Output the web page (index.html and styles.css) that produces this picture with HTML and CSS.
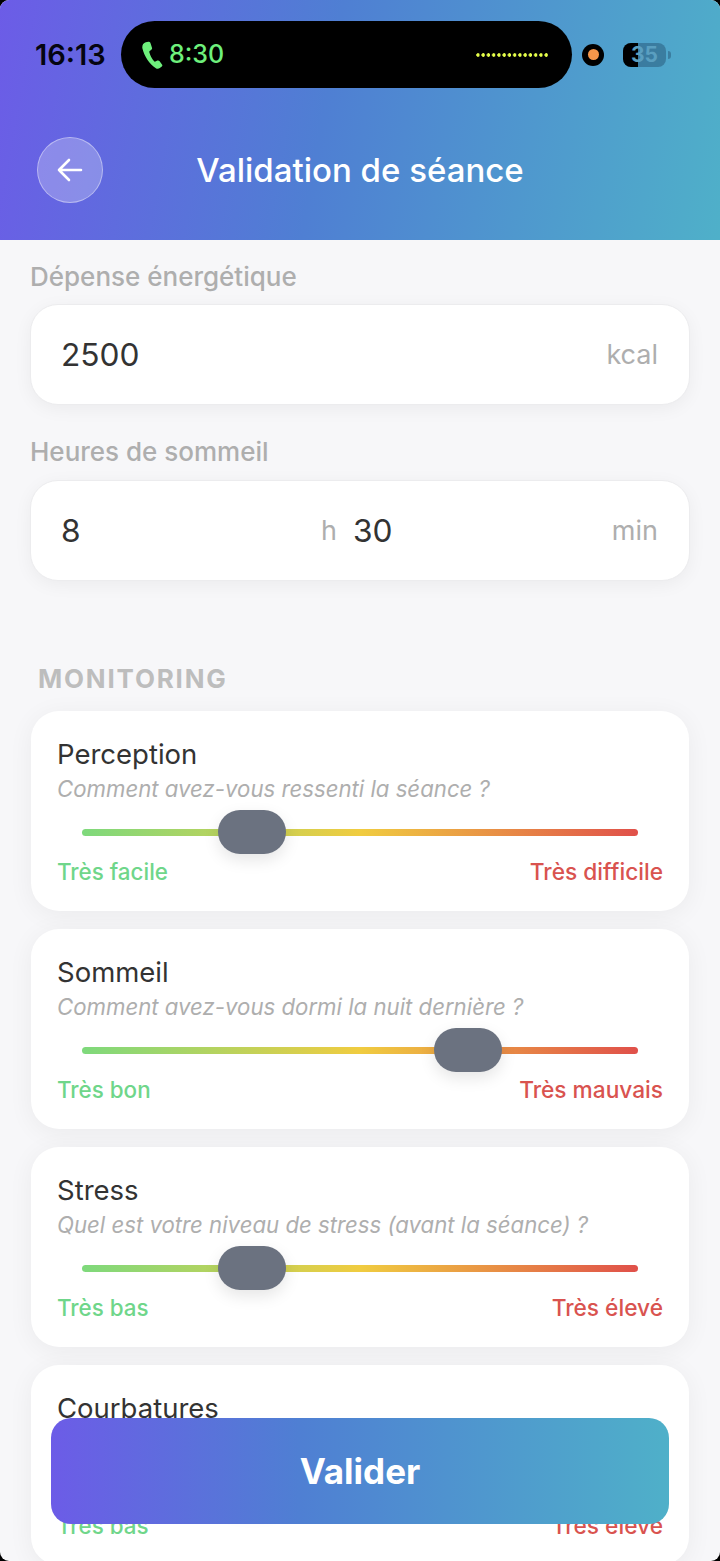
FILE: index.html
```html
<!DOCTYPE html>
<html lang="fr">
<head>
<meta charset="utf-8">
<title>Validation de séance</title>
<link rel="stylesheet" href="styles.css">
</head>
<body>
<div class="screen">
  <header class="header">
    <div class="status">
      <span class="clock">16:13</span>
      <div class="island">
        <svg class="phone" viewBox="0 0 24 30" width="22" height="28"><path d="M5.2 1.2 8 .5c1-.2 1.8.3 2.200 1.200l1.800 5.300c.3.9 0 1.700-.7 2.200L9.500 10.500c-.5.400-.6.900-.4 1.500 1 3.800 2.700 7 5.200 9.800.4.500.9.600 1.500.3l2-1c.9-.4 1.700-.2 2.300.5l2.800 3.700c.6.800.5 1.700-.2 2.300l-2.200 1.700c-1.300 1-3 1.100-4.300.1C9.200 24.800 3.600 16.500 1.500 7.500 1 4.800 2.500 2 5.200 1.200Z" fill="#6ef07c"/></svg>
        <span class="call-time">8:30</span>
        <span class="dots"></span>
      </div>
      <span class="rec"><span class="rec-dot"></span></span>
      <div class="battery"><span class="battery-fill"></span><span class="battery-num">35</span><span class="battery-nub"></span></div>
    </div>
    <div class="nav">
      <button class="back" type="button" aria-label="Retour">
        <svg viewBox="0 0 28 28" width="28" height="28" fill="none" stroke="#fff" stroke-width="2.600" stroke-linecap="round" stroke-linejoin="round"><path d="M25 14H3M13 4 3 14l10 10"/></svg>
      </button>
      <h1 class="title">Validation de séance</h1>
    </div>
  </header>

  <main class="content">
    <label class="field-label">Dépense énergétique</label>
    <div class="input-card">
      <span class="value">2500</span>
      <span class="unit">kcal</span>
    </div>
    <label class="field-label second">Heures de sommeil</label>
    <div class="input-card split">
      <div class="half first"><span class="value">8</span><span class="unit">h</span></div>
      <div class="half"><span class="value">30</span><span class="unit">min</span></div>
    </div>

    <h2 class="section">MONITORING</h2>

    <section class="card">
      <h3 class="card-title">Perception</h3>
      <p class="card-sub">Comment avez-vous ressenti la séance ?</p>
      <div class="track"><span class="thumb" style="left:136px"></span></div>
      <div class="ends"><span class="good">Très facile</span><span class="bad">Très difficile</span></div>
    </section>
    <section class="card">
      <h3 class="card-title">Sommeil</h3>
      <p class="card-sub">Comment avez-vous dormi la nuit dernière ?</p>
      <div class="track"><span class="thumb" style="left:352px"></span></div>
      <div class="ends"><span class="good">Très bon</span><span class="bad">Très mauvais</span></div>
    </section>
    <section class="card">
      <h3 class="card-title">Stress</h3>
      <p class="card-sub">Quel est votre niveau de stress (avant la séance) ?</p>
      <div class="track"><span class="thumb" style="left:136px"></span></div>
      <div class="ends"><span class="good">Très bas</span><span class="bad">Très élevé</span></div>
    </section>
    <section class="card">
      <h3 class="card-title">Courbatures</h3>
      <p class="card-sub">Quel est votre niveau de courbatures ?</p>
      <div class="track"><span class="thumb" style="left:136px"></span></div>
      <div class="ends"><span class="good">Très bas</span><span class="bad">Très élevé</span></div>
    </section>
  </main>

  <button class="submit" type="button">Valider</button>
</div>
</body>
</html>
```
FILE: styles.css
```css
* { box-sizing: border-box; }
html { background: #000; }
html, body { margin: 0; padding: 0; height: 1561px; overflow: hidden; }
body { font-family: Inter, "Liberation Sans", sans-serif; }

.screen {
  position: relative;
  width: 720px;
  height: 1561px;
  overflow: hidden;
  background: #f7f7f9;
  border-radius: 9px;
}

.header {
  height: 240px;
  padding-top: 21px;
  background: linear-gradient(100deg, #6c5ce7 0%, #4f7fd3 45%, #4fb0c9 100%);
}

.status { display: flex; align-items: center; height: 67px; padding-left: 35px; }
.clock { width: 86px; font-size: 29px; font-weight: 600; color: #050510; line-height: 1; }
.island {
  display: flex;
  align-items: center;
  width: 451px;
  height: 67px;
  padding-left: 20px;
  background: #000;
  border-radius: 34px;
}
.phone { display: block; }
.call-time { margin-left: 6px; font-size: 25px; font-weight: 500; color: #6ef07c; line-height: 1; }
.dots {
  width: 72px;
  height: 4px;
  margin-left: auto;
  margin-right: 24px;
  background: radial-gradient(circle at 2px 2px, #e6ff4a 1.500px, transparent 2px) 0 0 / 5.250px 4px repeat-x;
}
.rec {
  display: flex;
  align-items: center;
  justify-content: center;
  width: 22px;
  height: 22px;
  margin-left: 10px;
  background: #000;
  border-radius: 50%;
}
.rec-dot { width: 11px; height: 11px; background: #f5964a; border-radius: 50%; }
.battery {
  position: relative;
  display: flex;
  align-items: center;
  justify-content: center;
  width: 43px;
  height: 24px;
  margin-left: 19px;
  background: rgba(30, 70, 100, 0.42);
  border-radius: 8px;
}
.battery-fill {
  position: absolute;
  left: 0;
  top: 0;
  width: 15px;
  height: 24px;
  background: #000;
  border-radius: 8px 0 0 8px;
}
.battery-num { position: relative; font-size: 21px; font-weight: 700; color: #5a9fc0; line-height: 1; }
.battery-nub {
  position: absolute;
  right: -5px;
  top: 8px;
  width: 3px;
  height: 8px;
  background: rgba(30, 70, 100, 0.42);
  border-radius: 0 3px 3px 0;
}

.nav { position: relative; height: 66px; margin-top: 49px; display: flex; align-items: center; justify-content: center; }
.back {
  position: absolute;
  left: 37px;
  top: 0;
  display: flex;
  align-items: center;
  justify-content: center;
  width: 66px;
  height: 66px;
  padding: 0;
  background: rgba(255, 255, 255, 0.25);
  border: 1px solid rgba(255, 255, 255, 0.4);
  border-radius: 50%;
}
.title { margin: 0; font-size: 33px; font-weight: 500; color: #fff; line-height: 1; }

.content { padding: 0 30px; }
.field-label {
  display: block;
  height: 64px;
  padding-top: 21px;
  font-size: 26px;
  font-weight: 500;
  line-height: 31px;
  color: #aeaeae;
}
.field-label.second { height: 75px; padding-top: 31px; }
.input-card {
  display: flex;
  align-items: center;
  justify-content: space-between;
  width: 660px;
  height: 101px;
  padding: 0 31px 0 30px;
  background: #fff;
  border: 1px solid #ececee;
  border-radius: 28px;
  box-shadow: 0 4px 18px rgba(0, 0, 0, 0.05);
}
.input-card.split { gap: 16px; }
.half { flex: 1; display: flex; align-items: center; justify-content: space-between; }
.half.first { flex: none; width: 276px; }
.value { font-size: 31.700px; color: #333; line-height: 1; }
.unit { font-size: 27px; color: #aeaeae; line-height: 1; }

.section {
  margin: 82px 0 17px 8px;
  font-size: 26px;
  font-weight: 700;
  letter-spacing: 1.800px;
  line-height: 31px;
  color: #bdbdbd;
}

.card {
  width: 658px;
  height: 200px;
  margin: 0 0 18px 1px;
  padding: 26px 26px 0;
  background: #fff;
  border-radius: 28px;
  box-shadow: 0 4px 26px rgba(0, 0, 0, 0.055);
}
.card-title { margin: 0; font-size: 27.500px; font-weight: 400; line-height: 34px; color: #333; }
.card-sub { margin: 4px 0 0; font-size: 22.200px; font-style: italic; line-height: 28px; color: #aeaeae; }
.track {
  position: relative;
  width: 556px;
  height: 7px;
  margin: 26px 0 0 25px;
  background: linear-gradient(90deg, #7ed97c 0%, #f0cc40 50%, #e0504a 100%);
  border-radius: 4px;
}
.thumb {
  position: absolute;
  top: -19px;
  width: 68px;
  height: 44px;
  background: #6b7280;
  border-radius: 22px;
  box-shadow: 0 6px 16px rgba(0, 0, 0, 0.1);
}
.ends { display: flex; justify-content: space-between; margin-top: 22px; font-size: 22.400px; font-weight: 500; line-height: 28px; }
.good { color: #6fd68a; }
.bad { color: #d9534f; font-size: 22.700px; }

.submit {
  position: absolute;
  left: 51px;
  top: 1418px;
  width: 618px;
  height: 106px;
  padding: 0;
  border: 0;
  border-radius: 20px;
  background: linear-gradient(90deg, #6c5ce7 0%, #4f7fd3 40%, #4fb0c9 100%);
  font: 700 35px Inter, "Liberation Sans", sans-serif;
  color: #fff;
}
```
